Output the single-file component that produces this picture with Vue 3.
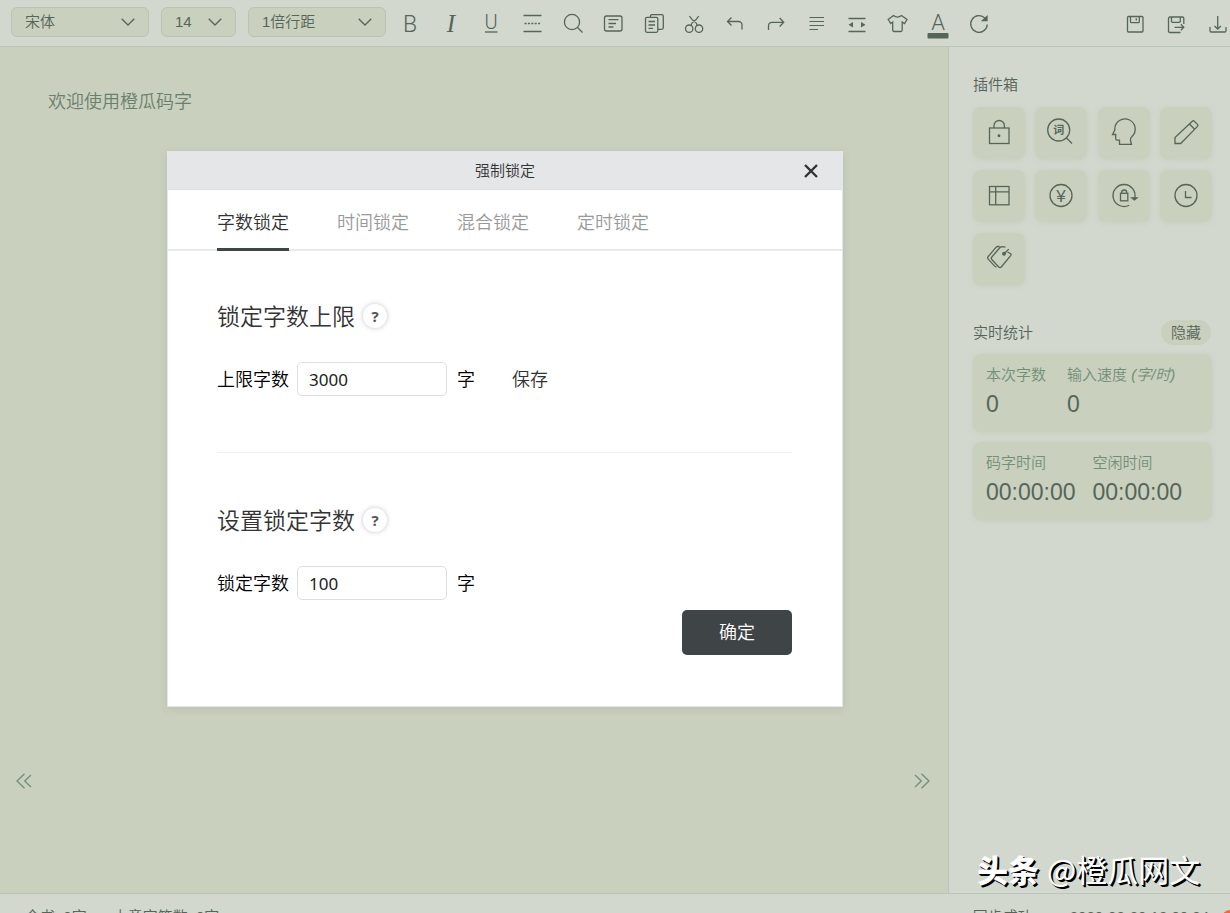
<script setup>
import { ref } from 'vue'

const font = ref('宋体')
const size = ref('14')
const spacing = ref('1倍行距')
const limit = ref('3000')
const lock = ref('100')
const active = ref(0)

const tabs = ['字数锁定', '时间锁定', '混合锁定', '定时锁定']

const tools = [
  { name: '加粗', svg: '<text x="12" y="20" font-size="23" font-family="Roboto, sans-serif" font-weight="300">B</text>' },
  { name: '斜体', svg: '<text x="12" y="20" font-size="25" font-family="Liberation Serif, serif" font-style="italic">I</text>' },
  { name: '下划线', svg: '<text x="12" y="17" font-size="20" font-family="Roboto, sans-serif" font-weight="300">U</text><path d="M6 20h12.5"/>' },
  { name: '分隔线', svg: '<path d="M3.5 3.5h18M3.5 19.5h18"/><path d="M4.5 11.5h16" stroke-dasharray="2 1.4"/>' },
  { name: '查找', svg: '<circle cx="11" cy="10" r="7.6"/><path d="M16.5 15.5l5 5"/>' },
  { name: '便签', svg: '<rect x="3.5" y="4" width="17.5" height="15" rx="2"/><path d="M7.5 7.7h10M7.5 11.5h7.5M7.5 15h5"/>' },
  { name: '复制', svg: '<path d="M8.5 5V4.2q0-1.5 1.5-1.5h9.8q1.5 0 1.5 1.5v11.6q0 1.5-1.5 1.5H16"/><rect x="3.5" y="5.3" width="12.3" height="15" rx="1.5"/><path d="M6.5 9.5h6.5M6.5 13h6.5M6.5 16.3h4.5"/>' },
  { name: '剪切', svg: '<circle cx="7.2" cy="16.7" r="3.7"/><circle cx="17" cy="16.7" r="3.7"/><path d="M7.5 4q2.3 4.2 6.2 6.5.9.6 1.3 3M16.7 4q-2.3 4.2-6.2 6.5-.9.6-1.3 3"/>' },
  { name: '撤销', svg: '<path d="M8.500 5.500l-4 4 4 4M4.500 9.500h11a3.500 3.500 0 0 1 3.500 3.500v4.500"/>' },
  { name: '重做', svg: '<path d="M15.7 6l4 4.3-4 4.2M19.7 10.3H8a3.5 3.5 0 0 0-3.5 3.5V18"/>' },
  { name: '对齐', svg: '<path stroke-width="1.1" d="M5.5 5.5h14.5M5.5 9.5h14.5M5.5 13.5h14.5M5.5 17.5h8.5"/>' },
  { name: '段距', svg: '<path d="M3.5 6.5h17M3.5 19.5h17"/><path class="solid" stroke="none" d="M3.5 12.7l4.500-2.700v5.400zM20.500 12.700l-4.500-2.700v5.400z"/>' },
  { name: '皮肤', svg: '<path d="M8.500 3.500q4 3.200 8 0l5.500 4-2.500 4-2.300-1.500v8q0 1.500-1.500 1.500H9.200q-1.500 0-1.500-1.500v-8L5.700 11.500l-2.500-4z"/>' },
  { name: '文字颜色', svg: '<text x="12" y="18" font-size="22" font-family="Roboto, sans-serif">A</text><rect class="solid" stroke="none" x="1.500" y="21" width="21" height="5.500" rx="1"/>' },
  { name: '刷新', svg: '<path d="M18.200 6.400A8.300 8.300 0 1 0 20.300 12.500"/><path class="solid" d="M20 4.500v4h-4.500z"/>' }
]

const fileTools = [
  { name: '保存', svg: '<rect x="4.5" y="4.5" width="15.5" height="15.5" rx="1"/><path d="M7.5 4.5v5.2q0 1 1 1h6.8q1 0 1-1V4.5M13.3 6.3v2.2"/>' },
  { name: '另存为', svg: '<path d="M16.5 20.5H6q-1.5 0-1.5-1.5V6.5Q4.5 5 6 5h12.500q1.300 0 1.300 1.300V12M7.500 5v4.300q0 1 1 1h6.800q1 0 1-1V5M10.500 15.300h9.300M16.800 12.300l3 3-3 3"/>' },
  { name: '下载', svg: '<path d="M12.700 4v13M9.500 14l3.200 3 3.200-3M5 15v3.700q0 1.300 1.300 1.300h13.400q1.300 0 1.300-1.300V15"/>' }
]

const plugins = [
  { name: '锁定', svg: '<rect x="4.5" y="9" width="19.5" height="15.5"/><path d="M9 9V6.500a5.200 5 0 0 1 10.400 0V9"/><circle class="solid" cx="14" cy="16.700" r=".8"/>' },
  { name: '查词', svg: '<circle cx="11.7" cy="11" r="11"/><path d="M19 18.500l6 6"/><text x="11.7" y="15" font-size="11" font-weight="700" font-family="Noto Sans CJK SC, sans-serif">词</text>' },
  { name: '人物', svg: '<path d="M4.800 10A10.200 10.200 0 1 1 22 17.500q-2 1.500-1.500 4l1 3.900H9.500v-4.200H7q-1.300 0-1.300-1.500v-4.200H2.500L4.800 11z"/>' },
  { name: '写作', svg: '<path d="M3 24.500v-6L20.300 2.200q1-1 2 0l3.200 3.200q1 1 0 2L8.700 24.500zM17.500 5l5.300 5.500"/>' },
  { name: '表格', svg: '<rect x="4.5" y="4.5" width="19.5" height="18.300"/><path d="M4.500 9.800h19.500M10.700 4.500v18.300"/>' },
  { name: '稿费', svg: '<circle cx="14" cy="13.5" r="11"/><text x="14" y="19.500" font-size="17" font-family="Liberation Sans, sans-serif">¥</text>' },
  { name: '旋转锁', svg: '<path d="M19.200 23.200A11 11 0 1 1 24.600 16.500"/><path class="solid" d="M21.800 15.800h5.200l-2.600 2.200z"/><rect x="10.500" y="11.300" width="7.300" height="7.500"/><path d="M11.700 11.300v-1a2.500 2.300 0 0 1 5 0v1"/>' },
  { name: '定时', svg: '<circle cx="14" cy="13.5" r="11"/><path d="M13.500 9v6.500h6"/>' },
  { name: '标签', svg: '<path d="M22.500 7l3.200 1.800q.6.500.1 1.500L16.500 21.700q-1.500 1.500-3 0L6.800 14.500q-1.200-1.300 0-2.500L15 2.500q.7-.8 2-.8l3.500.4M14.500 1.500h-1.700q-1 0-1.800.9L3.200 11.500q-1.200 1.300 0 2.600l6.500 7q.8.800 1.700 1M19 8.700l4.800-4.600"/><circle class="solid" cx="19" cy="8.700" r="1.300"/>' }
]

const stats = [
  [{ label: '本次字数', value: '0' }, { label: '输入速度', unit: '(字/时)', value: '0' }],
  [{ label: '码字时间', value: '00:00:00' }, { label: '空闲时间', value: '00:00:00' }]
]
</script>

<template>
  <div class="app">
    <header class="toolbar">
      <div class="selects">
        <label class="picker wide">
          <select v-model="font" aria-label="字体"><option>宋体</option></select>
          <svg viewBox="0 0 14 8"><path d="M.7.7L7 7 13.3.7" /></svg>
        </label>
        <label class="picker narrow">
          <select v-model="size" aria-label="字号"><option>14</option></select>
          <svg viewBox="0 0 14 8"><path d="M.7.7L7 7 13.3.7" /></svg>
        </label>
        <label class="picker wide">
          <select v-model="spacing" aria-label="行距"><option>1倍行距</option></select>
          <svg viewBox="0 0 14 8"><path d="M.7.7L7 7 13.3.7" /></svg>
        </label>
      </div>
      <div class="tools">
        <button v-for="t in tools" :key="t.name" type="button" :aria-label="t.name">
          <svg class="icon" viewBox="0 0 24 24" v-html="t.svg"></svg>
        </button>
      </div>
      <div class="file-tools">
        <button v-for="t in fileTools" :key="t.name" type="button" :aria-label="t.name">
          <svg class="icon" viewBox="0 0 24 24" v-html="t.svg"></svg>
        </button>
      </div>
    </header>

    <div class="workspace">
      <main class="editor">
        <p class="welcome">欢迎使用橙瓜码字</p>
        <div class="pager">
          <button type="button" aria-label="上一章">
            <svg viewBox="0 0 16 16"><path d="M8.5.7L1 8l7.500 7.300M15 2L8.700 8l6.300 6" /></svg>
          </button>
          <button type="button" aria-label="下一章">
            <svg viewBox="0 0 16 16"><path d="M7.5.7L15 8l-7.500 7.300M1 2l6.300 6L1 14" /></svg>
          </button>
        </div>
      </main>

      <aside class="sidebar">
        <h2 class="side-title">插件箱</h2>
        <div class="plugins">
          <button v-for="p in plugins" :key="p.name" type="button" :aria-label="p.name">
            <svg class="icon" viewBox="0 0 28 28" v-html="p.svg"></svg>
          </button>
        </div>
        <div class="stats-head">
          <h2 class="side-title">实时统计</h2>
          <button type="button" class="hide">隐藏</button>
        </div>
        <dl v-for="(card, i) in stats" :key="i" class="card" :class="{ timing: i === 1 }">
          <div v-for="s in card" :key="s.label">
            <dt>{{ s.label }} <em v-if="s.unit">{{ s.unit }}</em></dt>
            <dd>{{ s.value }}</dd>
          </div>
        </dl>
        <p class="signature"><b>头条</b><span>@橙瓜网文</span></p>
      </aside>
    </div>

    <footer class="status">
      <div class="counts"><span>全书: 0字</span><span>本章字符数: 0字</span></div>
      <div class="sync"><span>同步成功</span><time>2020-03-20 18:00:34</time></div>
      <i class="dot"></i>
    </footer>

    <section class="dialog" role="dialog" aria-labelledby="dialog-title">
      <header class="dialog-head">
        <h1 id="dialog-title">强制锁定</h1>
        <button type="button" class="close" aria-label="关闭">
          <svg viewBox="0 0 16 16"><path d="M2 2l12 12M14 2L2 14" /></svg>
        </button>
      </header>
      <nav class="tabs">
        <button v-for="(t, i) in tabs" :key="t" type="button" :class="{ active: active === i }" @click="active = i">{{ t }}</button>
      </nav>
      <form class="dialog-body" @submit.prevent>
        <section class="group">
          <h2>锁定字数上限<button type="button" class="help" aria-label="帮助">?</button></h2>
          <div class="row">
            <label for="limit">上限字数</label>
            <input id="limit" v-model="limit" type="text" />
            <span>字</span>
            <button type="button" class="save">保存</button>
          </div>
        </section>
        <section class="group">
          <h2>设置锁定字数<button type="button" class="help" aria-label="帮助">?</button></h2>
          <div class="row">
            <label for="lock">锁定字数</label>
            <input id="lock" v-model="lock" type="text" />
            <span>字</span>
          </div>
        </section>
        <button type="submit" class="confirm">确定</button>
      </form>
    </section>
  </div>
</template>

<style>
body {
  background: #d2d8ce;
}
</style>

<style scoped>
.app {
  position: relative;
  display: grid;
  grid-template-rows: 47px 1fr 20px;
  height: 100vh;
  overflow: hidden;
  background: #d2d8ce;
  color: #56655a;
  font: 350 15px/20px "Liberation Sans", "Noto Sans CJK SC", sans-serif;
}
* {
  box-sizing: border-box;
}
h1, h2, p, dl, dd {
  margin: 0;
  font-weight: inherit;
}
button {
  padding: 0;
  border: 0;
  background: none;
  color: inherit;
  font: inherit;
  cursor: pointer;
}
svg {
  display: block;
  fill: none;
  stroke: currentColor;
  stroke-width: 1.3;
  overflow: visible;
}
.icon :deep(text) {
  fill: currentColor;
  stroke: none;
  text-anchor: middle;
}
.icon :deep(.solid) {
  fill: currentColor;
}

.toolbar {
  display: flex;
  align-items: center;
  border-bottom: 1px solid #b7c5bb;
}
.selects {
  display: flex;
  gap: 12px;
  padding-left: 11px;
  margin-bottom: 2px;
}
.picker {
  display: grid;
  align-items: center;
}
.picker > * {
  grid-area: 1 / 1;
}
.picker select {
  width: 100%;
  height: 30px;
  padding: 0 13px;
  border: 1px solid #b7c5b8;
  border-radius: 6px;
  background: #c9d0bd;
  color: #56655a;
  font: inherit;
  appearance: none;
}
.picker svg {
  width: 14px;
  height: 8px;
  justify-self: end;
  margin-right: 14px;
  pointer-events: none;
}
.wide {
  width: 138px;
}
.narrow {
  width: 75px;
}
.tools,
.file-tools {
  display: grid;
  grid-auto-flow: column;
  grid-auto-columns: 1fr;
  flex: none;
}
.tools {
  width: 609px;
  margin-left: 4px;
}
.file-tools {
  width: 122px;
  margin-left: auto;
  margin-right: -7px;
}
.tools button,
.file-tools button {
  display: grid;
  place-items: center;
  height: 46px;
  padding-top: 2px;
}
.tools svg,
.file-tools svg {
  width: 24px;
  height: 24px;
}

.workspace {
  display: grid;
  grid-template-columns: 1fr 282px;
  min-height: 0;
}
.editor {
  display: flex;
  flex-direction: column;
  justify-content: space-between;
  background: #c9d0bd;
}
.welcome {
  padding: 42px 48px 0;
  font-size: 18px;
  line-height: 26px;
  color: #6b7f6f;
}
.pager {
  display: flex;
  justify-content: space-between;
  padding: 0 18px 104px 16px;
  color: #728f78;
}
.pager svg {
  width: 16px;
  height: 16px;
}

.sidebar {
  display: flex;
  flex-direction: column;
  padding: 28px 18px 0 24px;
  border-left: 1px solid #b7c5bb;
}
.side-title {
  font-size: 15px;
  line-height: 20px;
}
.plugins {
  display: grid;
  grid-template-columns: repeat(4, 52px);
  justify-content: space-between;
  row-gap: 11px;
  margin-top: 12px;
}
.plugins button,
.card {
  border-radius: 8px;
  background: #c9d0bd;
  box-shadow: 0 1px 5px rgba(190, 198, 178, 0.5);
}
.plugins button {
  display: grid;
  place-items: center;
  height: 52px;
}
.plugins svg {
  width: 28px;
  height: 28px;
}
.stats-head {
  display: flex;
  justify-content: space-between;
  align-items: center;
  margin: 35px 1px 9px 0;
}
.hide {
  width: 50px;
  height: 25px;
  border-radius: 13px;
  background: #c9d0bd;
}
.card {
  display: flex;
  gap: 21px;
  height: 78px;
  margin-bottom: 10px;
  padding: 11px 13px;
}
.card.timing {
  gap: 17px;
}
.card dt {
  color: #728f78;
}
.card dd {
  margin-top: 4px;
  font-size: 23px;
  line-height: 30px;
}
.signature {
  display: flex;
  gap: 8px;
  margin-top: auto;
  margin-left: 4px;
  padding-bottom: 3px;
  color: #fff;
  font: 400 31px/42px "Noto Sans CJK SC", sans-serif;
  text-shadow: 2px 2px 0 #000, 1px 1px 0 #000;
  white-space: nowrap;
}
.signature b {
  font-weight: 900;
}

.status {
  display: flex;
  align-items: flex-start;
  min-width: 0;
  overflow: hidden;
  padding-top: 13px;
  border-top: 1px solid #b7c5bb;
}
.counts,
.sync {
  display: flex;
  gap: 26px;
  padding-left: 25px;
}
.sync {
  gap: 37px;
  margin-left: auto;
}
.dot {
  flex: none;
  width: 16px;
  height: 16px;
  margin: 3px -8px 0 13px;
  border-radius: 50%;
  background: #f2693c;
}

.dialog {
  position: absolute;
  top: 151px;
  left: 167px;
  right: 387px;
  border: 1px solid #e5e6e8;
  background: #fff;
  color: #000;
  box-shadow: 0 2px 8px rgba(120, 135, 110, 0.2);
}
.dialog-head {
  display: grid;
  align-items: center;
  height: 38px;
  border-bottom: 1px solid #dedfe0;
  background: #e5e6e8;
  color: #333;
}
.dialog-head > * {
  grid-area: 1 / 1;
}
.dialog-head h1 {
  font-size: 15px;
  text-align: center;
}
.close {
  justify-self: end;
  margin-right: 23px;
}
.close svg {
  width: 16px;
  height: 16px;
  stroke-width: 2.4;
}
.tabs {
  display: flex;
  gap: 48px;
  height: 61px;
  padding: 0 49px;
  border-bottom: 2px solid #e6eaee;
}
.tabs button {
  height: 61px;
  padding-top: 8px;
  border-bottom: 3px solid transparent;
  color: #999;
  font-size: 18px;
}
.tabs .active {
  border-color: #3f4447;
  color: #333;
}
.dialog-body {
  display: flex;
  flex-direction: column;
  padding: 0 50px 51px 49px;
}
.group {
  padding: 49px 0 0;
}
.group:first-child {
  padding-bottom: 56px;
  border-bottom: 1px solid #f0f0f0;
}
.group + .group {
  padding-top: 51px;
}
.group h2 {
  display: flex;
  align-items: center;
  gap: 8px;
  height: 34px;
  color: #333;
  font-size: 23px;
  line-height: 34px;
}
.help {
  width: 24px;
  height: 24px;
  margin-bottom: 3px;
  border-radius: 50%;
  background: #fff;
  box-shadow: 0 0 5px rgba(60, 60, 90, 0.3);
  color: #555;
  font: 700 15px/24px "Noto Sans", sans-serif;
}
.row {
  display: flex;
  align-items: center;
  height: 34px;
  margin-top: 28px;
  font-size: 18px;
  line-height: 22px;
}
.row label,
.row span,
.row .save {
  padding-top: 2px;
}
.row input {
  width: 150px;
  height: 34px;
  margin: 0 10px 0 8px;
  padding: 0 11px;
  border: 1px solid #dedede;
  border-radius: 5px;
  background: #fff;
  color: #222;
  font: 400 17px "Noto Sans", sans-serif;
}
.save {
  margin-left: 37px;
  color: #333;
}
.confirm {
  align-self: flex-end;
  width: 110px;
  height: 45px;
  margin-top: 10px;
  border-radius: 5px;
  background: #3f4447;
  color: #fff;
  font-size: 18px;
}
</style>
